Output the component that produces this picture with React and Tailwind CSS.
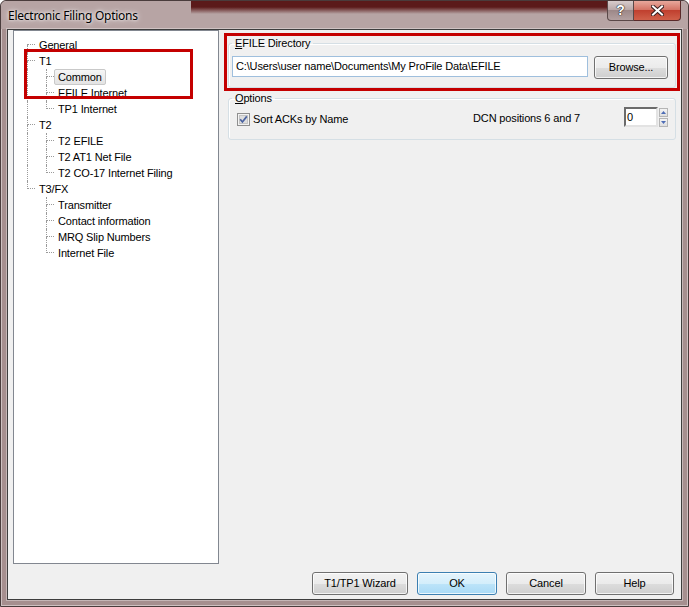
import React from 'react';

const TREE = [
  { label: 'General' },
  { label: 'T1', children: ['Common', 'EFILE Internet', 'TP1 Internet'] },
  { label: 'T2', children: ['T2 EFILE', 'T2 AT1 Net File', 'T2 CO-17 Internet Filing'] },
  { label: 'T3/FX', children: ['Transmitter', 'Contact information', 'MRQ Slip Numbers', 'Internet File'] },
];

const DOT = 'border-dotted border-[#9a9a9a]';

function Elbow({ top, bottom }) {
  return (
    <div className="flex h-full w-[21px] shrink-0">
      <div className="w-[13px]" />
      <div className="flex w-[8px] flex-col">
        <div className={`h-[8px] border-b ${DOT} ${top ? 'border-l' : ''}`} />
        <div className={`flex-1 ${bottom ? `border-l ${DOT}` : ''}`} />
      </div>
    </div>
  );
}

function Carry({ on }) {
  return (
    <div className="h-full w-[19px] shrink-0 pl-[13px]">
      <div className={`h-full ${on ? `border-l ${DOT}` : ''}`} />
    </div>
  );
}

function TreeRow({ children, selected }) {
  return (
    <span
      className={`flex h-[16px] items-center rounded-[2px] border px-[3px] ${
        selected
          ? 'border-[#c9c9c9] bg-[linear-gradient(180deg,#f6f6f6,#e3e3e3)]'
          : 'border-transparent'
      }`}
    >
      {children}
    </span>
  );
}

function Tree() {
  const rows = [];
  TREE.forEach((node, i) => {
    const first = i === 0;
    const last = i === TREE.length - 1;
    rows.push(
      <div key={node.label} className="flex h-[16px] items-stretch">
        <Elbow top={!first} bottom={!last} />
        <TreeRow>{node.label}</TreeRow>
      </div>
    );
    node.children?.forEach((c, j) => {
      const lastChild = j === node.children.length - 1;
      rows.push(
        <div key={c} className="flex h-[16px] items-stretch">
          <Carry on={!last} />
          <Elbow top bottom={!lastChild} />
          <TreeRow selected={c === 'Common'}>{c}</TreeRow>
        </div>
      );
    });
  });
  return (
    <div className="h-[534px] w-[206px] shrink-0 border border-[#828790] bg-white pt-[6px]">
      {rows}
    </div>
  );
}

function Btn({ children, className, primary }) {
  return (
    <button
      className={`h-[23px] rounded-[3px] border text-[11px] text-black shadow-[inset_0_0_0_1px_rgba(255,255,255,0.75)] ${
        primary
          ? 'border-[#3c7fb1] bg-[linear-gradient(180deg,#e5f4fc_0%,#d4eefb_50%,#bde4f9_50%,#a9daf6_100%)]'
          : 'border-[#707070] bg-[linear-gradient(180deg,#f2f2f2_0%,#ebebeb_50%,#dddddd_50%,#cfcfcf_100%)]'
      } ${className}`}
    >
      {children}
    </button>
  );
}

function Check() {
  return (
    <svg width="13" height="13" viewBox="0 0 13 13" className="shrink-0">
      <rect x="0.5" y="0.5" width="12" height="12" fill="#f3f3f3" stroke="#8f8f8f" />
      <rect x="2.5" y="2.5" width="8" height="8" fill="#dedede" stroke="#c4c4c4" />
      <path d="M3.2 6.3 L5.4 9 L9.8 3.4" stroke="#4a62a0" strokeWidth="1.7" fill="none" />
    </svg>
  );
}

function SpinArrow({ up }) {
  return (
    <div className="flex h-[9px] w-[9px] items-center justify-center border border-[#b5b5b5] bg-[linear-gradient(180deg,#f4f4f4,#dedede)]">
      <svg width="5" height="3" viewBox="0 0 5 3">
        <path d={up ? 'M0 3 L2.5 0 L5 3 Z' : 'M0 0 L2.5 3 L5 0 Z'} fill="#4d6cb5" />
      </svg>
    </div>
  );
}

export default function App() {
  return (
    <div className="relative h-[607px] w-[689px] overflow-hidden bg-white font-['Liberation_Sans',Arial,sans-serif] text-[11px] tracking-[-0.15px] text-black">
      <div className="flex h-full flex-col rounded-t-[6px] border border-[#4a3c3c] bg-[#a68f8f] shadow-[inset_0_0_0_1px_rgba(255,255,255,0.45)]">
        {/* title bar */}
        <div className="flex h-[28px] shrink-0 items-start justify-between rounded-t-[6px] bg-[#b7a4a4] bg-[linear-gradient(180deg,#5b1a1a_0px,#5b1a1a_6px,rgba(91,26,26,0)_13px)] bg-[length:450px_14px] bg-[position:190px_0] bg-no-repeat pl-[7px] pr-[7px]">
          <span className="mt-[7px] font-['Noto_Sans',sans-serif] text-[12px] leading-[16px] tracking-[-0.25px] text-black [text-shadow:0_0_6px_#fff,0_0_3px_#fff]">
            Electronic Filing Options
          </span>
          <div className="flex h-[20px]">
            <div className="flex w-[27px] items-center justify-center rounded-bl-[4px] border border-t-0 border-[#5a4848] bg-[linear-gradient(180deg,#d8cccc,#b7a5a5_50%,#9d8888_50%,#b3a0a0)] text-[14px] font-bold text-white [text-shadow:0_0_1px_#222,0_0_1px_#222,0_0_1px_#222]">
              ?
            </div>
            <div className="flex w-[47px] items-center justify-center rounded-br-[4px] border border-l-0 border-t-0 border-[#5a2a2a] bg-[linear-gradient(180deg,#e8a89c,#d26f60_50%,#c0402f_50%,#d0604a)]">
              <svg width="13" height="11" viewBox="0 0 13 11">
                <path d="M2 1.5 L11 9.5 M11 1.5 L2 9.5" stroke="#3a2020" strokeWidth="4" strokeLinecap="square" />
                <path d="M2 1.5 L11 9.5 M11 1.5 L2 9.5" stroke="#fff" strokeWidth="2" strokeLinecap="square" />
              </svg>
            </div>
          </div>
        </div>

        {/* client area */}
        <div className="mx-[6px] flex h-[571px] flex-col border border-[#3d3d3d] bg-[#f0f0f0] shadow-[0_0_0_1px_rgba(255,255,255,0.35)]">
          <div className="flex gap-[9px] pl-[5px] pr-[5px]">
            <Tree />

            <div className="flex flex-1 flex-col pt-[7px]">
              <fieldset className="rounded-[3px] border border-[#d5dfe5] shadow-[inset_1px_1px_0_#fff]">
                <legend className="ml-[3px] px-[3px] leading-[13px]">
                  <span className="underline">E</span>FILE Directory
                </legend>
                <div className="mt-[6px] flex items-start gap-[6px] pb-[8px] pl-[3px] pr-[7px]">
                  <div className="flex h-[21px] w-[356px] items-center border border-[#9fbfdd] bg-white pl-[3px]">
                    {'C:\\Users\\user name\\Documents\\My ProFile Data\\EFILE'}
                  </div>
                  <Btn className="h-[22px] w-[74px]">Browse...</Btn>
                </div>
              </fieldset>

              <fieldset className="mt-[4px] rounded-[3px] border border-[#d5dfe5] shadow-[inset_1px_1px_0_#fff]">
                <legend className="ml-[3px] px-[3px] leading-[13px]">
                  <span className="underline">O</span>ptions
                </legend>
                <div className="mt-[2px] flex items-start pb-[12px] pl-[8px] pr-[7px]">
                  <div className="mt-[6px] flex items-center gap-[3px]">
                    <Check />
                    <span className="leading-[13px]">Sort ACKs by Name</span>
                  </div>
                  <span className="ml-auto mt-[5px] leading-[13px]">DCN positions 6 and 7</span>
                  <div className="ml-[44px] flex h-[20px] w-[34px] items-center border-2 border-b-[#e3e3e3] border-l-[#6b6b6b] border-r-[#e3e3e3] border-t-[#6b6b6b] bg-white pl-[1px]">
                    0
                  </div>
                  <div className="ml-[1px] flex flex-col gap-[1px] pt-[1px]">
                    <SpinArrow up />
                    <SpinArrow />
                  </div>
                </div>
              </fieldset>
            </div>
          </div>

          <div className="mt-[8px] flex justify-end gap-[9px] pr-[7px]">
            <Btn className="w-[96px]">T1/TP1 Wizard</Btn>
            <Btn className="w-[80px]" primary>OK</Btn>
            <Btn className="w-[80px]">Cancel</Btn>
            <Btn className="w-[79px]">Help</Btn>
          </div>
        </div>
      </div>

      {/* red annotation boxes */}
      <div className="absolute left-[24px] top-[49px] h-[50px] w-[169px] border-[3px] border-[#c40000]" />
      <div className="absolute left-[224px] top-[33px] h-[58px] w-[456px] border-[3px] border-[#c40000]" />
    </div>
  );
}
